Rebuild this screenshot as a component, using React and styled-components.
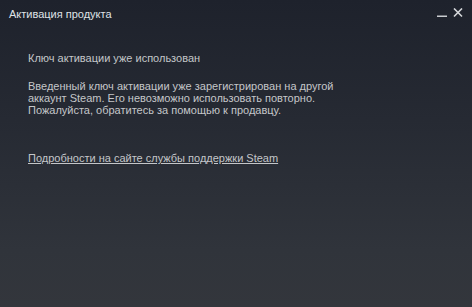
import React from "react";
import styled, { createGlobalStyle } from "styled-components";

const Global = createGlobalStyle`
  html, body { margin: 0; padding: 0; }
  body { width: 472px; height: 307px; overflow: hidden; background: #23262e; }
`;

const Window = styled.div`
  width: 472px;
  height: 307px;
  box-sizing: border-box;
  display: flex;
  flex-direction: column;
  font-family: "Liberation Sans", Arial, sans-serif;
  font-size: 11px;
  line-height: 12px;
  background: linear-gradient(to bottom, #1e222c 0px, #262a33 120px, #30343b 250px, #33363c 307px);
`;

const TitleBar = styled.div`
  height: 28px;
  box-sizing: border-box;
  display: flex;
  align-items: flex-start;
  padding: 8px 9px 0 9px;
`;

const Title = styled.div`
  flex: 1;
  color: #dfe2e6;
`;

const Controls = styled.div`
  display: flex;
  align-items: flex-start;
  gap: 6px;
`;

const CtrlIcon = styled.svg`
  display: block;
  width: 10px;
  height: 10px;
`;

const Content = styled.div`
  padding: 24px 28px 0 28px;
  color: #c4c6c9;
`;

const Heading = styled.div`
  margin-bottom: 16px;
`;

const Para = styled.p`
  margin: 0 0 36px 0;
`;

const SupportLink = styled.a`
  color: #c4c6c9;
  text-decoration: underline;
`;

export default function App() {
  return (
    <>
      <Global />
      <Window>
        <TitleBar>
          <Title>Активация продукта</Title>
          <Controls>
            <CtrlIcon viewBox="0 0 10 10">
              <rect x="0" y="7.5" width="10" height="1.5" fill="#c9ccd0" />
            </CtrlIcon>
            <CtrlIcon viewBox="0 0 10 10">
              <path d="M1 0.5 L9 8.5 M9 0.5 L1 8.5" stroke="#d6d8db" strokeWidth="1.6" />
            </CtrlIcon>
          </Controls>
        </TitleBar>
        <Content>
          <Heading>Ключ активации уже использован</Heading>
          <Para>
            Введенный ключ активации уже зарегистрирован на другой
            <br />
            аккаунт Steam. Его невозможно использовать повторно.
            <br />
            Пожалуйста, обратитесь за помощью к продавцу.
          </Para>
          <SupportLink href="#">Подробности на сайте службы поддержки Steam</SupportLink>
        </Content>
      </Window>
    </>
  );
}
